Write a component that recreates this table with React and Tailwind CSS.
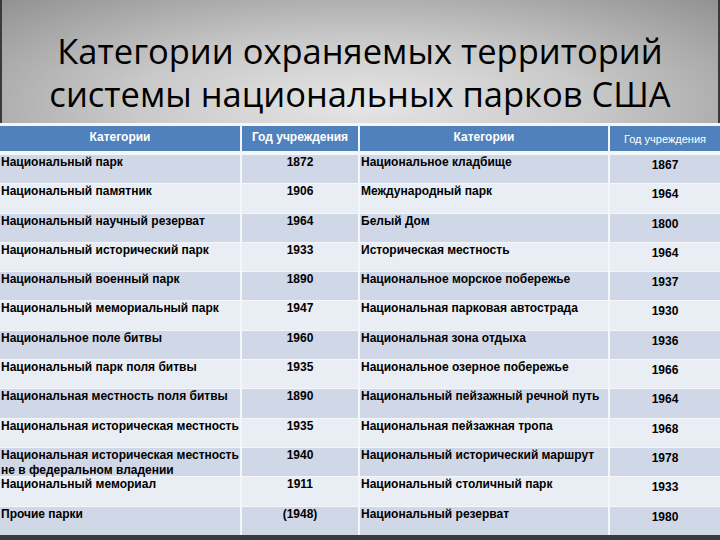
import React from 'react';

const rows = [
  ['Национальный парк', '1872', 'Национальное кладбище', '1867'],
  ['Национальный памятник', '1906', 'Международный парк', '1964'],
  ['Национальный научный резерват', '1964', 'Белый Дом', '1800'],
  ['Национальный исторический парк', '1933', 'Историческая местность', '1964'],
  ['Национальный военный парк', '1890', 'Национальное морское побережье', '1937'],
  ['Национальный мемориальный парк', '1947', 'Национальная парковая автострада', '1930'],
  ['Национальное поле битвы', '1960', 'Национальная зона отдыха', '1936'],
  ['Национальный парк поля битвы', '1935', 'Национальное озерное побережье', '1966'],
  ['Национальная местность поля битвы', '1890', 'Национальный пейзажный речной путь', '1964'],
  ['Национальная историческая местность', '1935', 'Национальная пейзажная тропа', '1968'],
  ['Национальная историческая местность не в федеральном владении', '1940', 'Национальный исторический маршрут', '1978'],
  ['Национальный мемориал', '1911', 'Национальный столичный парк', '1933'],
  ['Прочие парки', '(1948)', 'Национальный резерват', '1980'],
];

const App = () => {
  return (
    <div className="w-[720px] h-[540px] overflow-hidden bg-[#3a3a3a] flex flex-col" style={{ fontFamily: '"Liberation Sans", Arial, sans-serif' }}>
      <div className="h-[123px] shrink-0 mx-[2px] flex flex-col items-center justify-center pt-[20px] bg-[radial-gradient(ellipse_at_50%_85%,#e6e6e6_0%,#c9c9c9_45%,#929292_100%)]">
        <h1 className="text-[34.5px] leading-[43px] text-black text-center whitespace-nowrap" style={{ fontFamily: '"Open Sans", sans-serif' }}>
          Категории охраняемых территорий
          <br />
          системы национальных парков США
        </h1>
      </div>
      <div className="bg-[#f4f6fa] pt-[3px] grid grid-cols-[240px_116px_248px_1fr] gap-x-[2px] gap-y-px content-start">
        <div className="h-[25px] bg-[#4f81bd] text-white font-bold text-[12px] text-center pt-[2px]">Категории</div>
        <div className="h-[25px] bg-[#4f81bd] text-white font-bold text-[12px] text-center pt-[2px]">Год учреждения</div>
        <div className="h-[25px] bg-[#4f81bd] text-white font-bold text-[12px] text-center pt-[2px]">Категории</div>
        <div className="h-[25px] bg-[#4f81bd] text-white text-[11px] text-center pt-[5px]">Год учреждения</div>
        <div className="col-span-4 h-[2px]" />
        {rows.map((r, i) => {
          const bg = i % 2 === 0 ? 'bg-[#d0d8e8]' : 'bg-[#e9edf4]';
          return (
            <React.Fragment key={i}>
              <div className={`${bg} h-[28.3px] pl-[1px] text-[12px] leading-[15px] font-bold text-black`}>
                {r[0]}
              </div>
              <div className={`${bg} h-[28.3px] text-[12px] leading-[15px] font-bold text-black text-center`}>
                {r[1]}
              </div>
              <div className={`${bg} h-[28.3px] pl-[1px] text-[12px] leading-[15px] font-bold text-black`}>
                {r[2]}
              </div>
              <div className={`${bg} h-[28.3px] pt-[3px] text-[12px] leading-[15px] font-bold text-black text-center`}>
                {r[3]}
              </div>
            </React.Fragment>
          );
        })}
      </div>
    </div>
  );
};

export default App;
